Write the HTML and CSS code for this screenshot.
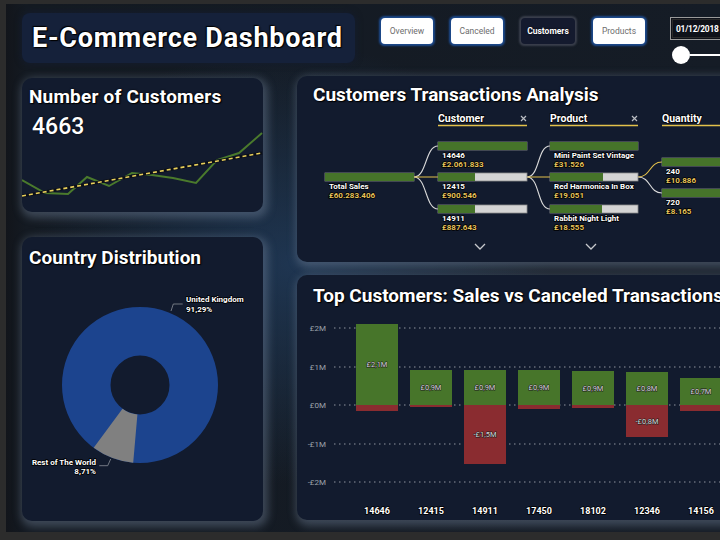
FILE: index.html
```html
<!DOCTYPE html>
<html>
<head>
<meta charset="utf-8">
<link rel="stylesheet" href="styles.css">
</head>
<body>
<div class="frame">
  <div class="canvas">
    <header class="top">
      <div class="title-card"><h1>E-Commerce Dashboard</h1></div>
      <nav class="tabs">
        <span class="tab">Overview</span>
        <span class="tab">Canceled</span>
        <span class="tab active">Customers</span>
        <span class="tab">Products</span>
      </nav>
      <div class="date-slicer">
        <div class="date-box">01/12/2018</div>
        <div class="slider"><span class="knob"></span><span class="track"></span></div>
      </div>
    </header>

    <div class="grid">
      <div class="col col-left">
        <section class="card kpi">
          <div class="kpi-text">
            <h2>Number of Customers</h2>
            <div class="kpi-value">4663</div>
          </div>
          <svg class="kpi-chart" width="241" height="84" viewBox="0 0 241 84">
            <polyline fill="none" stroke="#4a7a2c" stroke-width="2" points="0,52 23,65 46,66 65,49 87,58 110,45 130,47 151,50 174,55 195,32 217,25 240,5"/>
            <line x1="0" y1="68" x2="240" y2="25" stroke="#0b0f18" stroke-width="3"/>
            <line x1="0" y1="68" x2="240" y2="25" stroke="#e8cf5a" stroke-width="1.6" stroke-dasharray="4 3"/>
          </svg>
        </section>

        <section class="card donut">
          <h2>Country Distribution</h2>
          <svg class="donut-chart" width="241" height="252" viewBox="0 0 241 252">
            <circle cx="118" cy="116" r="53.75" fill="none" stroke="#1c448e" stroke-width="48.5"/>
            <path d="M111.2,193.7 A78,78 0 0,1 71.7,178.8 L100.5,139.7 A29.5,29.5 0 0,0 115.4,145.4 Z" fill="#808080"/>
            <polyline points="149,42 151.3,35 160.7,35" fill="none" stroke="#8a8f98" stroke-width="0.8"/>
            <text class="lbl" x="164" y="33">United Kingdom</text>
            <text class="lbl" x="164" y="43">91,29%</text>
            <polyline points="88.7,190 85.7,196.7 77.3,196.7" fill="none" stroke="#8a8f98" stroke-width="0.8"/>
            <text class="lbl" x="74" y="196" text-anchor="end">Rest of The World</text>
            <text class="lbl" x="74" y="205" text-anchor="end">8,71%</text>
          </svg>
        </section>
      </div>

      <div class="col col-right">
        <section class="card decomp">
          <h2>Customers Transactions Analysis</h2>
          <svg class="decomp-chart" width="440" height="186" viewBox="0 0 440 186">
            <g class="hdr">
              <text x="141" y="46">Customer</text>
              <line x1="141" y1="49.5" x2="230" y2="49.5" class="uline"/>
              <path d="M224,40 L229,45 M229,40 L224,45" class="xmark"/>
              <text x="253" y="46">Product</text>
              <line x1="253" y1="49.5" x2="341" y2="49.5" class="uline"/>
              <path d="M335,40 L340,45 M340,40 L335,45" class="xmark"/>
              <text x="365" y="46">Quantity</text>
              <line x1="365" y1="49.5" x2="440" y2="49.5" class="uline"/>
            </g>

            <g class="links">
              <path d="M117,101 C130,101 128,70 141,70" class="lk"/>
              <path d="M117,101 C130,101 128,133 141,133" class="lk"/>
              <path d="M117,101 L141,101" class="lk sel"/>
              <path d="M230,101 C243,101 240,70 253,70" class="lk"/>
              <path d="M230,101 C243,101 240,133 253,133" class="lk"/>
              <path d="M230,101 L253,101" class="lk sel"/>
              <path d="M341,101 C354,101 352,117 365,117" class="lk"/>
              <path d="M341,101 C354,101 352,86 365,86" class="lk sel"/>
            </g>

            <g class="bars">
              <rect x="28" y="97" width="89" height="8" class="bg"/><rect x="28" y="97" width="89" height="8" class="fg"/>
              <rect x="141" y="66" width="89" height="8" class="bg"/><rect x="141" y="66" width="89" height="8" class="fg"/>
              <rect x="141" y="97" width="89" height="8" class="bg"/><rect x="141" y="97" width="37" height="8" class="fg"/>
              <rect x="141" y="129" width="89" height="8" class="bg"/><rect x="141" y="129" width="37" height="8" class="fg"/>
              <rect x="253" y="66" width="88" height="8" class="bg"/><rect x="253" y="66" width="88" height="8" class="fg"/>
              <rect x="253" y="97" width="88" height="8" class="bg"/><rect x="253" y="97" width="53" height="8" class="fg"/>
              <rect x="253" y="129" width="88" height="8" class="bg"/><rect x="253" y="129" width="52" height="8" class="fg"/>
              <rect x="365" y="82" width="90" height="8" class="bg"/><rect x="365" y="82" width="90" height="8" class="fg"/>
              <rect x="365" y="113" width="90" height="8" class="bg"/><rect x="365" y="113" width="90" height="8" class="fg"/>
            </g>

            <g class="nodes">
              <text x="32" y="113" class="nm">Total Sales</text><text x="32" y="122" class="vl">£60.283.406</text>
              <text x="145" y="82" class="nm">14646</text><text x="145" y="91" class="vl">£2.061.833</text>
              <text x="145" y="113" class="nm">12415</text><text x="145" y="122" class="vl">£900.546</text>
              <text x="145" y="145" class="nm">14911</text><text x="145" y="154" class="vl">£887.643</text>
              <text x="257" y="82" class="nm">Mini Paint Set Vintage</text><text x="257" y="91" class="vl">£31.526</text>
              <text x="257" y="113" class="nm">Red Harmonica In Box</text><text x="257" y="122" class="vl">£19.051</text>
              <text x="257" y="145" class="nm">Rabbit Night Light</text><text x="257" y="154" class="vl">£18.555</text>
              <text x="369" y="98" class="nm">240</text><text x="369" y="107" class="vl">£10.886</text>
              <text x="369" y="129" class="nm">720</text><text x="369" y="138" class="vl">£8.165</text>
            </g>

            <polyline points="178,168 183,173 188,168" class="chev"/>
            <polyline points="289,168 294,173 299,168" class="chev"/>
          </svg>
        </section>

        <section class="card barcard">
          <h2>Top Customers: Sales vs Canceled Transactions</h2>
          <svg class="bar-chart" width="440" height="245" viewBox="0 0 440 245">
            <g class="grid-lines">
              <line x1="37" y1="53" x2="440" y2="53"/>
              <line x1="37" y1="92" x2="440" y2="92"/>
              <line x1="37" y1="130" x2="440" y2="130"/>
              <line x1="37" y1="169" x2="440" y2="169"/>
              <line x1="37" y1="207" x2="440" y2="207"/>
            </g>
            <g class="ylab">
              <text x="29" y="56">£2M</text>
              <text x="29" y="95">£1M</text>
              <text x="29" y="133">£0M</text>
              <text x="29" y="172">-£1M</text>
              <text x="29" y="210">-£2M</text>
            </g>
            <g class="cols">
              <rect x="59" y="49" width="42" height="81" class="g"/><rect x="59" y="130" width="42" height="6" class="r"/>
              <rect x="113" y="95" width="42" height="35" class="g"/><rect x="113" y="130" width="42" height="2" class="r"/>
              <rect x="167" y="95" width="42" height="35" class="g"/><rect x="167" y="130" width="42" height="59" class="r"/>
              <rect x="221" y="95" width="42" height="35" class="g"/><rect x="221" y="130" width="42" height="4" class="r"/>
              <rect x="275" y="96" width="42" height="34" class="g"/><rect x="275" y="130" width="42" height="3" class="r"/>
              <rect x="329" y="97" width="42" height="33" class="g"/><rect x="329" y="130" width="42" height="32" class="r"/>
              <rect x="383" y="103" width="42" height="27" class="g"/><rect x="383" y="130" width="42" height="6" class="r"/>
            </g>
            <g class="blab">
              <text x="80" y="92">£2,1M</text>
              <text x="134" y="115">£0,9M</text>
              <text x="188" y="115">£0,9M</text>
              <text x="242" y="115">£0,9M</text>
              <text x="296" y="116">£0,9M</text>
              <text x="350" y="116">£0,8M</text>
              <text x="404" y="119">£0,7M</text>
              <text x="188" y="162">-£1,5M</text>
              <text x="350" y="149">-£0,8M</text>
            </g>
            <g class="xlab">
              <text x="80" y="239">14646</text>
              <text x="134" y="239">12415</text>
              <text x="188" y="239">14911</text>
              <text x="242" y="239">17450</text>
              <text x="296" y="239">18102</text>
              <text x="350" y="239">12346</text>
              <text x="404" y="239">14156</text>
            </g>
          </svg>
        </section>
      </div>
    </div>
  </div>
</div>
</body>
</html>
```

FILE: styles.css
```css
* { box-sizing: border-box; }
html, body { margin: 0; padding: 0; }
body {
  width: 720px;
  height: 540px;
  overflow: hidden;
  background: #2c2c2c;
  font-family: Roboto, "Liberation Sans", sans-serif;
}
.frame {
  padding: 4px 0 8px 6px;
  height: 540px;
}
.canvas {
  width: 714px;
  height: 528px;
  overflow: hidden;
  background:
    radial-gradient(ellipse 260px 220px at 285px 260px, rgba(34,62,96,0.75), rgba(20,30,45,0) 100%),
    linear-gradient(90deg, #12151b 0px, #141a22 20px, #151c26 100%);
  padding: 9px 0 0 16px;
}

/* header */
.top {
  display: flex;
  align-items: flex-start;
  height: 50px;
}
.top > * { flex: none; }
.title-card {
  width: 333px;
  height: 50px;
  background: #15213a;
  border-radius: 8px;
  box-shadow: 0 0 6px 1px rgba(20,28,45,0.9);
  display: flex;
  align-items: center;
  padding-left: 10px;
}
h1 {
  margin: 0;
  color: #fff;
  font-size: 27px;
  font-weight: 700;
  letter-spacing: 0.75px;
  text-shadow: 0 0 2px #000, 1px 1px 1px #000, -1px -1px 1px #000;
}
.tabs {
  display: flex;
  gap: 18px;
  margin-left: 26px;
  margin-top: 5px;
}
.tab {
  display: flex;
  align-items: center;
  justify-content: center;
  width: 52px;
  height: 26px;
  background: #fff;
  border-radius: 4px;
  color: #6d6d6d;
  font-size: 8.5px;
  box-shadow: 0 0 2px 1.5px #1c4a8e;
}
.tab.active {
  width: 54px;
  background: #141a2e;
  color: #fff;
  font-weight: 700;
  box-shadow: 0 0 2px 1.5px #3a3f4c;
  text-shadow: 0 0 2px #000;
}
.date-slicer {
  margin-left: 25px;
  margin-top: 4px;
  display: flex;
  flex-direction: column;
}
.date-box {
  width: 70px;
  height: 23px;
  border: 1px solid #9a9a9a;
  outline: 1px solid #2a2a2a;
  outline-offset: -3px;
  color: #fff;
  font-weight: 700;
  font-size: 8.4px;
  letter-spacing: -0.2px;
  display: flex;
  align-items: center;
  padding-left: 5px;
  background: #0e1119;
}
.slider {
  display: flex;
  align-items: center;
  margin-top: 6px;
  margin-left: 2px;
}
.knob {
  width: 18px;
  height: 18px;
  border-radius: 50%;
  background: #fff;
}
.track {
  width: 40px;
  height: 2px;
  background: #fff;
}

/* grid */
.grid {
  display: flex;
  gap: 34px;
  margin-top: 13px;
}
.col {
  display: flex;
  flex-direction: column;
  flex: none;
}
.col-left {
  width: 241px;
  gap: 25px;
  padding-top: 2px;
}
.col-right {
  width: 440px;
  gap: 13px;
}
.card {
  background: #121b2e;
  border-radius: 10px;
  box-shadow: 2px 3px 9px 3px rgba(120,135,160,0.42);
  display: grid;
  overflow: hidden;
}
.card > * { grid-area: 1 / 1; }
.kpi { height: 134px; }
.donut { height: 284px; }
.decomp { height: 186px; }
.barcard { height: 245px; }

h2 {
  margin: 0;
  color: #fff;
  font-weight: 700;
  font-size: 19px;
  line-height: 22px;
  text-shadow: 0 0 2px #000, 1px 1px 1px #000;
  position: relative;
  z-index: 1;
}
.kpi-text { padding: 8px 0 0 7px; position: relative; z-index: 1; }
.kpi-text h2 { font-size: 19px; letter-spacing: 0.2px; }
.kpi-value {
  margin-top: 6px;
  margin-left: 3px;
  color: #fff;
  font-size: 23px;
  line-height: 26px;
  font-weight: 500;
  text-shadow: 0 0 2px #000;
}
.kpi-chart { align-self: end; }

.donut h2 { margin: 10px 0 0 7px; align-self: start; }
.donut-chart { align-self: end; }
.lbl {
  fill: #fff;
  font-size: 8px;
  font-weight: 700;
  paint-order: stroke;
  stroke: #000;
  stroke-width: 1.5px;
}

.decomp h2 { margin: 8px 0 0 16px; align-self: start; }
.hdr text {
  fill: #fff;
  font-size: 10.5px;
  font-weight: 700;
  paint-order: stroke;
  stroke: #000;
  stroke-width: 1.5px;
}
.uline { stroke: #e3c14b; stroke-width: 1.5; }
.xmark { stroke: #b9bcc2; stroke-width: 1.2; fill: none; }
.lk { fill: none; stroke: #d9d9d9; stroke-width: 1.1; }
.lk.sel { stroke: #e3c14b; }
.bars .bg { fill: #d4d4d4; stroke: #8d8d8d; stroke-width: 0.8; }
.bars .fg { fill: #46742a; }
.nodes text {
  font-size: 8px;
  font-weight: 700;
  paint-order: stroke;
  stroke: #000;
  stroke-width: 1.4px;
}
.nodes .nm { fill: #fff; }
.nodes .vl { fill: #e6c35c; }
.chev { fill: none; stroke: #c7c9cd; stroke-width: 1.3; }

.barcard h2 { margin: 10px 0 0 16px; align-self: start; }
.grid-lines line { stroke: #8e949e; stroke-width: 1; stroke-dasharray: 1.5 3.5; }
.ylab text { fill: #9ea3ab; font-size: 8px; text-anchor: end; }
.cols .g { fill: #47752a; }
.cols .r { fill: #8a2c30; }
.blab text {
  fill: #d8d8d8;
  font-size: 7.5px;
  text-anchor: middle;
  paint-order: stroke;
  stroke: #1a1a1a;
  stroke-width: 1px;
}
.xlab text {
  fill: #fff;
  font-size: 9px;
  font-weight: 700;
  text-anchor: middle;
  paint-order: stroke;
  stroke: #000;
  stroke-width: 1.4px;
}
```
